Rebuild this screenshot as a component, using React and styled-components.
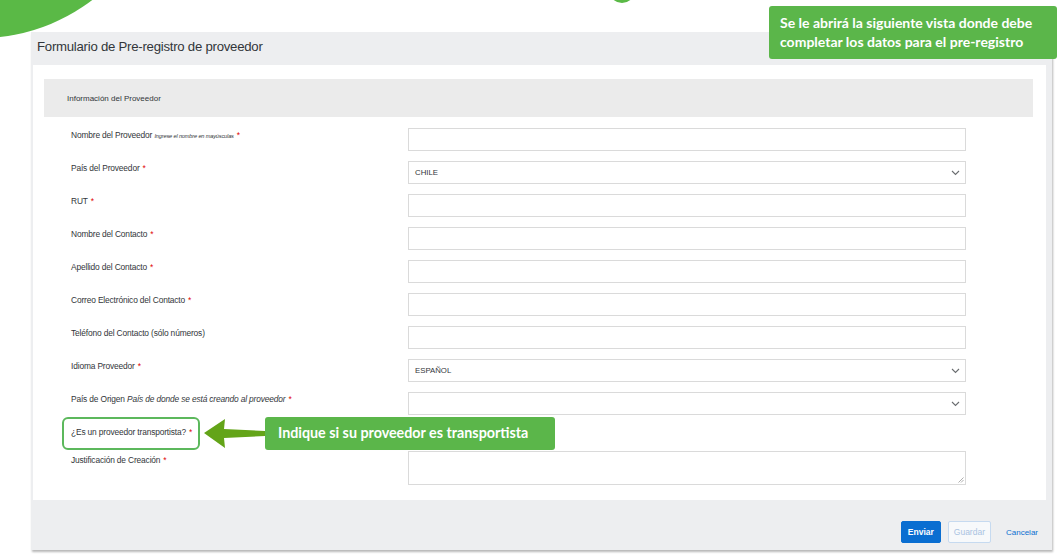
import React from 'react'
import styled, { createGlobalStyle } from 'styled-components'

const GlobalStyle = createGlobalStyle`
  html, body {
    margin: 0;
    padding: 0;
    background: #ffffff;
  }
  body {
    font-family: "Liberation Sans", Arial, sans-serif;
    color: #32363a;
  }
  * { box-sizing: border-box; }
`

const Page = styled.div`
  position: relative;
  width: 1062px;
  height: 555px;
  overflow: hidden;
  padding: 32px 0 0 31px;
`
const Blob = styled.div`
  position: absolute;
  border-radius: 50%;
  background: #5ab946;
  left: ${p => p.x}px;
  top: ${p => p.y}px;
  width: ${p => p.size}px;
  height: ${p => p.size}px;
`
const Window = styled.div`
  width: 1021px;
  height: 518px;
  background: #edeef0;
  box-shadow: 1px 2px 2px rgba(0, 0, 0, 0.28);
  display: flex;
  flex-direction: column;
`
const Header = styled.div`
  height: 33px;
  padding: 0 6px 4px;
  display: flex;
  align-items: center;
  font-size: 13.2px;
  letter-spacing: -0.25px;
  color: #32363a;
`
const Body = styled.div`
  margin: 0 6px 0 2px;
  background: #ffffff;
  padding: 14px 13px 15px 11px;
`
const SectionHeader = styled.div`
  height: 38px;
  background: #ebebeb;
  padding-left: 23px;
  display: flex;
  align-items: center;
  font-size: 8px;
  color: #32363a;
`
const Form = styled.div`
  margin-top: 11px;
  display: flex;
  flex-direction: column;
`
const Row = styled.div`
  display: grid;
  grid-template-columns: 337px 558px;
  padding-left: 27px;
  margin-bottom: ${p => (p.last ? 0 : 10)}px;
  min-height: ${p => p.minH || 23}px;
`
const Label = styled.div`
  position: relative;
  font-size: 8.4px;
  letter-spacing: -0.15px;
  line-height: 11px;
  padding-top: ${p => p.pt || 2}px;
  color: #32363a;
  white-space: nowrap;
`
const Hint = styled.i`
  font-size: ${p => (p.small ? '5.6px' : 'inherit')};
`
const Req = styled.span`
  color: #e00000;
  margin-left: 3px;
`
const Highlight = styled.span`
  position: absolute;
  left: -9px;
  top: -8px;
  width: 138px;
  height: 33px;
  border: 2px solid #5cb85c;
  border-radius: 6px;
`
const Input = styled.div`
  height: 23px;
  border: 1px solid #dadada;
  background: #ffffff;
  display: flex;
  align-items: center;
  justify-content: space-between;
  padding: 0 5px 0 6px;
  font-size: 7.8px;
  color: #32363a;
`
const TextArea = styled.div`
  position: relative;
  height: 34px;
  border: 1px solid #dadada;
  background: #ffffff;
`
const Grip = styled.svg`
  position: absolute;
  right: 1px;
  bottom: 1px;
`
const Footer = styled.div`
  flex: 1;
  display: flex;
  justify-content: flex-end;
  align-items: flex-start;
  padding: 21px 14px 0 0;
  gap: 7px;
`
const Button = styled.div`
  height: 22px;
  padding: ${p => (p.ghost ? '0' : p.primary ? '0 6px' : '0 5px')};
  border-radius: 2px;
  display: flex;
  align-items: center;
  font-size: ${p => (p.ghost ? 8 : 8.5)}px;
  font-weight: ${p => (p.primary ? 700 : 400)};
  background: ${p => (p.primary ? '#0a6ed1' : p.ghost ? 'transparent' : '#f7f9fb')};
  color: ${p => (p.primary ? '#ffffff' : p.ghost ? '#0a6ed1' : '#a9c3e2')};
  border: ${p => (p.ghost ? 'none' : `1px solid ${p.primary ? '#0a6ed1' : '#c6daf0'}`)};
  margin-left: ${p => (p.ghost ? 8 : 0)}px;
`
const Callout = styled.div`
  position: absolute;
  left: ${p => p.x}px;
  top: ${p => p.y}px;
  width: ${p => p.w}px;
  height: ${p => p.h}px;
  background: #5bb64a;
  border-radius: 3px;
  color: #ffffff;
  font-family: Lato, "Open Sans", sans-serif;
  font-weight: 700;
  font-size: ${p => p.fs}px;
  line-height: 19px;
  padding: ${p => p.pad};
  white-space: nowrap;
`
const Arrow = styled.svg`
  position: absolute;
  left: 203px;
  top: 418px;
`

const Chevron = () => (
  <svg width="9" height="6" viewBox="0 0 9 6">
    <path d="M1 1 L4.5 4.5 L8 1" fill="none" stroke="#6a6d70" strokeWidth="1.1" />
  </svg>
)

const fields = [
  { label: <>Nombre del Proveedor <Hint small>Ingrese el nombre en mayúsculas</Hint></>, req: true },
  { label: 'País del Proveedor', req: true, value: 'CHILE', select: true },
  { label: 'RUT', req: true },
  { label: 'Nombre del Contacto', req: true },
  { label: 'Apellido del Contacto', req: true },
  { label: 'Correo Electrónico del Contacto', req: true },
  { label: 'Teléfono del Contacto (sólo números)' },
  { label: 'Idioma Proveedor', req: true, value: 'ESPAÑOL', select: true },
  { label: <>País de Origen <Hint>País de donde se está creando al proveedor</Hint></>, req: true, select: true },
]

export default function App() {
  return (
    <>
      <GlobalStyle />
      <Page>
        <Blob x={-205} y={-332} size={370} />
        <Blob x={609} y={-23} size={26} />
        <Window>
          <Header>Formulario de Pre-registro de proveedor</Header>
          <Body>
            <SectionHeader>Información del Proveedor</SectionHeader>
            <Form>
              {fields.map((f, i) => (
                <Row key={i}>
                  <Label>
                    {f.label}
                    {f.req && <Req>*</Req>}
                  </Label>
                  <Input>
                    <span>{f.value || ''}</span>
                    {f.select && <Chevron />}
                  </Input>
                </Row>
              ))}
              <Row minH={16}>
                <Label>
                  ¿Es un proveedor transportista?<Req>*</Req>
                  <Highlight />
                </Label>
              </Row>
              <Row last>
                <Label pt={4}>
                  Justificación de Creación<Req>*</Req>
                </Label>
                <TextArea>
                  <Grip width="6" height="6" viewBox="0 0 6 6">
                    <path d="M5.5 0.5 L0.5 5.5 M5.5 3 L3 5.5" stroke="#9a9a9a" strokeWidth="0.8" />
                  </Grip>
                </TextArea>
              </Row>
            </Form>
          </Body>
          <Footer>
            <Button primary>Enviar</Button>
            <Button>Guardar</Button>
            <Button ghost>Cancelar</Button>
          </Footer>
        </Window>

        <Callout x={769} y={6} w={288} h={53} fs={14} pad="7px 11px">
          Se le abrirá la siguiente vista donde debe<br />completar los datos para el pre-registro
        </Callout>
        <Arrow width="64" height="32" viewBox="0 0 64 32">
          <path d="M1 15 L22 1 L21 11 L62 13 L62 18 L21 20 L22 30 Z" fill="#63a418" />
        </Arrow>
        <Callout x={265} y={417} w={290} h={33} fs={14.3} pad="6px 13px">
          Indique si su proveedor es transportista
        </Callout>
      </Page>
    </>
  )
}
